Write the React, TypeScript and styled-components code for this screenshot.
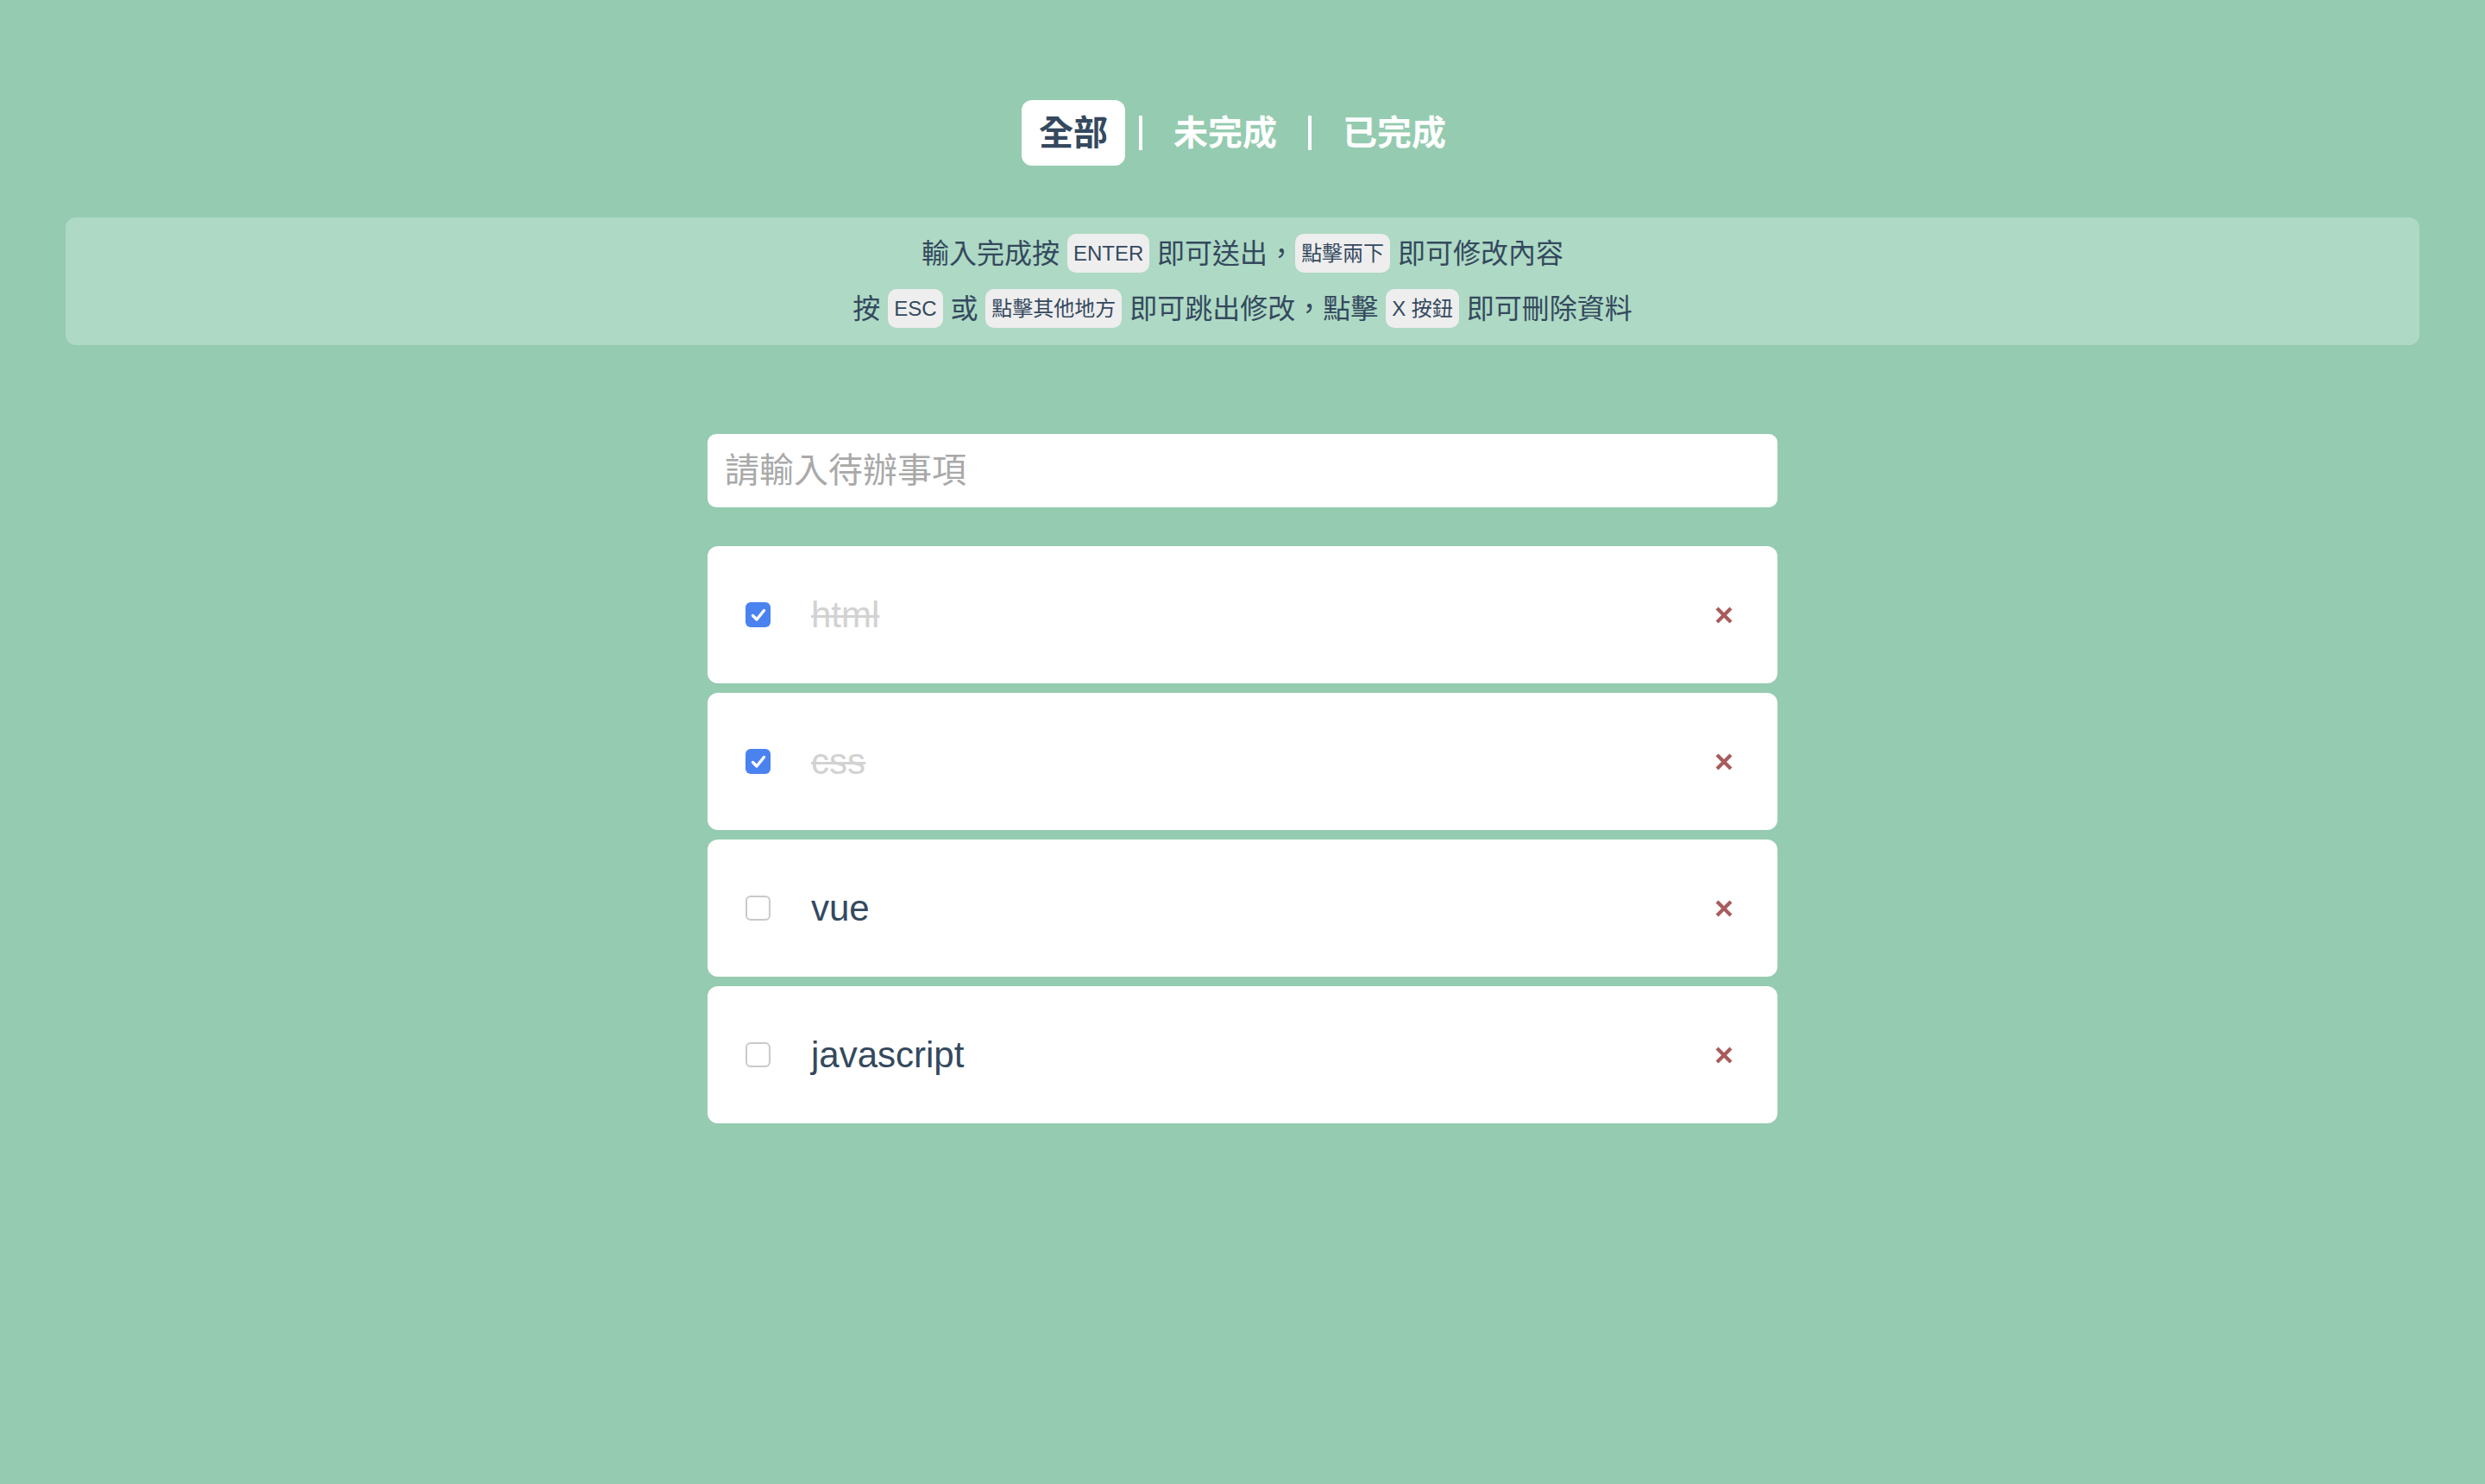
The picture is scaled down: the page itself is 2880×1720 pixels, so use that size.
import React, { useState } from "react";
import styled, { createGlobalStyle } from "styled-components";

interface todoType {
  id: number;
  text: string;
  done: boolean;
}

const GlobalStyle = createGlobalStyle`
  body {
    margin: 0;
    background-color: #95cbb0;
    font-family: "Liberation Sans", "Noto Sans CJK TC", sans-serif;
  }
  * {
    box-sizing: border-box;
  }
`;

const tabs = ["全部", "未完成", "已完成"];

export default function App() {
  const [tab, setTab] = useState<number>(0);
  const [todo, setTodo] = useState<string>("");
  const [todos, setTodos] = useState<todoType[]>([
    { id: 1, text: "html", done: true },
    { id: 2, text: "css", done: true },
    { id: 3, text: "vue", done: false },
    { id: 4, text: "javascript", done: false },
  ]);

  const toggle = (id: number) => {
    setTodos(todos.map((t) => (t.id === id ? { ...t, done: !t.done } : t)));
  };
  const remove = (id: number) => {
    setTodos(todos.filter((t) => t.id !== id));
  };
  const handleKeyDown = (e: React.KeyboardEvent<HTMLInputElement>) => {
    if (e.key === "Enter" && todo !== "") {
      setTodos([...todos, { id: Date.now(), text: todo, done: false }]);
      setTodo("");
    }
  };

  const shown = todos.filter((t) =>
    tab === 0 ? true : tab === 1 ? !t.done : t.done
  );

  return (
    <>
      <GlobalStyle />
      <Page>
        <Tabs>
          {tabs.map((name, i) => (
            <React.Fragment key={name}>
              {i > 0 && <Divider />}
              <Tab active={i === tab} onClick={() => setTab(i)}>
                {name}
              </Tab>
            </React.Fragment>
          ))}
        </Tabs>

        <Hint>
          <div>
            輸入完成按 <Key>ENTER</Key> 即可送出，<Key>點擊兩下</Key> 即可修改內容
          </div>
          <div>
            按 <Key>ESC</Key> 或 <Key>點擊其他地方</Key> 即可跳出修改，點擊{" "}
            <Key>X 按鈕</Key> 即可刪除資料
          </div>
        </Hint>

        <Main>
          <TodoInput
            type="text"
            value={todo}
            placeholder="請輸入待辦事項"
            onChange={(e) => setTodo(e.target.value)}
            onKeyDown={handleKeyDown}
          />
          <List>
            {shown.map((item) => (
              <Item key={item.id}>
                <Check checked={item.done} onClick={() => toggle(item.id)}>
                  {item.done && (
                    <svg width="22" height="22" viewBox="0 0 22 22">
                      <path
                        d="M4.5 11.5 L9 16 L17.5 5.5"
                        fill="none"
                        stroke="#fff"
                        strokeWidth="3.4"
                        strokeLinecap="round"
                        strokeLinejoin="round"
                      />
                    </svg>
                  )}
                </Check>
                <Label done={item.done}>{item.text}</Label>
                <Delete onClick={() => remove(item.id)}>
                  <svg width="20" height="20" viewBox="0 0 20 20">
                    <path
                      d="M2 2 L18 18 M18 2 L2 18"
                      stroke="#a85c5c"
                      strokeWidth="4.2"
                    />
                  </svg>
                </Delete>
              </Item>
            ))}
          </List>
        </Main>
      </Page>
    </>
  );
}

const Page = styled.div`
  padding: 116px 76px 0;
`;

const Tabs = styled.div`
  display: flex;
  justify-content: center;
  align-items: center;
`;

const Tab = styled.div<{ active: boolean }>`
  padding: 8px 20px;
  font-size: 40px;
  line-height: 60px;
  font-weight: bold;
  border-radius: 12px;
  cursor: pointer;
  color: ${(p) => (p.active ? "#34495e" : "#ffffff")};
  background-color: ${(p) => (p.active ? "#ffffff" : "transparent")};
`;

const Divider = styled.span`
  width: 4px;
  height: 40px;
  margin: 0 16px;
  background-color: #ffffff;
`;

const Hint = styled.div`
  margin-top: 60px;
  padding: 10px;
  background-color: #aed9c4;
  border-radius: 12px;
  text-align: center;
  font-size: 32px;
  line-height: 64px;
  color: #34495e;
`;

const Key = styled.kbd`
  display: inline-block;
  vertical-align: middle;
  margin-top: -6px;
  padding: 0 7px;
  font-family: "Liberation Sans", "Noto Sans CJK TC", sans-serif;
  font-size: 24px;
  line-height: 45px;
  background-color: #eeeeee;
  border-radius: 10px;
  color: #34495e;
`;

const Main = styled.div`
  width: 1240px;
  margin: 103px auto 0;
`;

const TodoInput = styled.input`
  display: block;
  width: 100%;
  height: 85px;
  padding: 0 20px;
  border: none;
  border-radius: 10px;
  outline: none;
  font-family: "Liberation Sans", "Noto Sans CJK TC", sans-serif;
  font-size: 40px;
  color: #34495e;
  &::placeholder {
    color: #a9a9a9;
  }
`;

const List = styled.ul`
  list-style: none;
  margin: 45px 0 0;
  padding: 0;
  display: flex;
  flex-direction: column;
  gap: 11px;
`;

const Item = styled.li`
  display: flex;
  align-items: center;
  height: 159px;
  padding: 0 52px 0 44px;
  background-color: #ffffff;
  border-radius: 12px;
`;

const Check = styled.span<{ checked: boolean }>`
  display: flex;
  align-items: center;
  justify-content: center;
  width: 29px;
  height: 29px;
  border-radius: 6px;
  cursor: pointer;
  background-color: ${(p) => (p.checked ? "#4a82f0" : "#ffffff")};
  border: ${(p) => (p.checked ? "none" : "2px solid #c9c9c9")};
`;

const Label = styled.span<{ done: boolean }>`
  margin-left: 47px;
  font-size: 42px;
  color: ${(p) => (p.done ? "#d2d2d2" : "#34495e")};
  text-decoration: ${(p) => (p.done ? "line-through" : "none")};
  text-decoration-thickness: 3px;
`;

const Delete = styled.span`
  display: flex;
  margin-left: auto;
  cursor: pointer;
`;
